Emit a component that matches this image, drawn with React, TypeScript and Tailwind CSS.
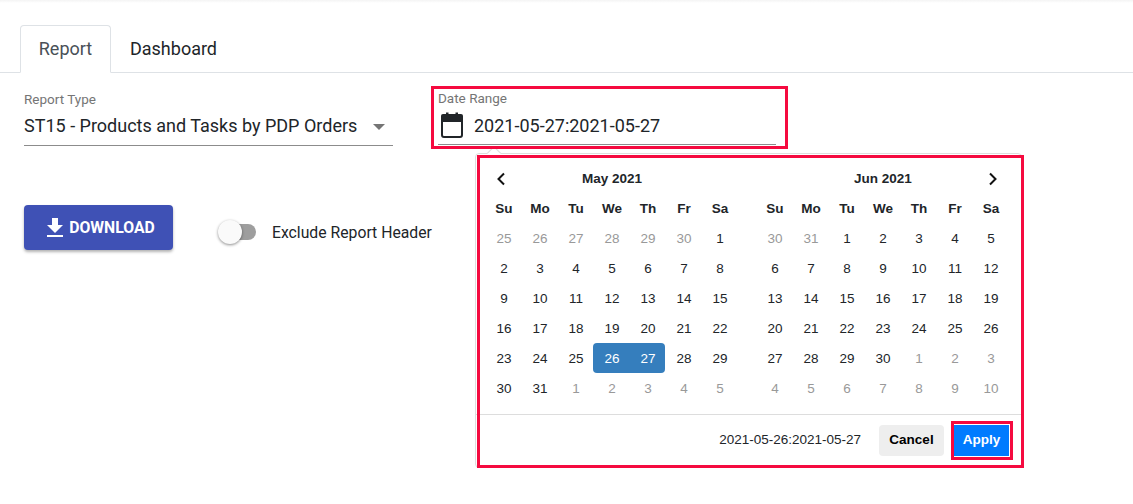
import React from "react";

const dow = ["Su", "Mo", "Tu", "We", "Th", "Fr", "Sa"];
type Cell = { d: number; off?: boolean; sel?: "l" | "r" };
const range = (a: number, b: number, off = false): Cell[] => {
  const r: Cell[] = [];
  for (let i = a; i <= b; i++) r.push({ d: i, off });
  return r;
};
const may: Cell[] = [
  ...range(25, 30, true),
  ...range(1, 25),
  { d: 26, sel: "l" },
  { d: 27, sel: "r" },
  ...range(28, 31),
  ...range(1, 5, true),
];
const jun: Cell[] = [...range(30, 31, true), ...range(1, 30), ...range(1, 10, true)];

function Month({ title, cells, left, right }: { title: string; cells: Cell[]; left?: boolean; right?: boolean }) {
  return (
    <div className="w-[252px]">
      <div className="h-[30px] flex items-center relative">
        <div className="w-9 flex justify-center pr-[6px]">
          {left && (
            <svg width="10" height="14" viewBox="0 0 10 14" fill="none" stroke="#111" strokeWidth="2">
              <path d="M8 1.5 L2.5 7 L8 12.5" />
            </svg>
          )}
        </div>
        <div className="flex-1 text-center font-bold text-[#212529]">{title}</div>
        <div className="w-9 flex justify-center pl-[4px]">
          {right && (
            <svg width="10" height="14" viewBox="0 0 10 14" fill="none" stroke="#111" strokeWidth="2">
              <path d="M2 1.5 L7.5 7 L2 12.5" />
            </svg>
          )}
        </div>
      </div>
      <div className="grid grid-cols-7">
        {dow.map((d) => (
          <div key={d} className="h-[30px] flex items-center justify-center font-bold text-[#212529]">
            {d}
          </div>
        ))}
        {cells.map((c, i) => (
          <div
            key={i}
            className={
              c.sel === "l"
                ? "h-[30px] -ml-[1px] mr-[1px] pl-[2px] -mt-[1px] mb-[1px] pt-[2px] flex items-center justify-center bg-[#357ebd] text-white rounded-l-[4px]"
                : c.sel === "r"
                ? "h-[30px] -ml-[1px] mr-[1px] pl-[2px] -mt-[1px] mb-[1px] pt-[2px] flex items-center justify-center bg-[#357ebd] text-white rounded-r-[4px]"
                : c.off
                ? "h-[30px] flex items-center justify-center text-[#999]"
                : "h-[30px] flex items-center justify-center text-[#212529]"
            }
          >
            {c.d}
          </div>
        ))}
      </div>
    </div>
  );
}

export default function App() {
  return (
    <div className="relative w-[1133px] h-[504px] bg-white overflow-hidden font-['Roboto',sans-serif] text-[#212529]">
      <div className="h-[3px] bg-gradient-to-b from-[#f4f4f4] to-white" />
      <div className="pt-[22px] px-5 h-[70px] border-b border-[#dee2e6] flex">
        <div className="w-[91px] h-12 pb-[1px] border border-[#dee2e6] border-b-white rounded-t-[4px] bg-white flex items-center justify-center text-[18px] text-[#495057]">
          Report
        </div>
        <div className="w-[124px] h-12 pb-[1px] pl-[1px] flex items-center justify-center text-[18px] text-[#212529]">Dashboard</div>
      </div>

      <div className="flex pl-6 pt-[19px]">
        <div className="w-[369px]">
          <div className="text-[13.5px] leading-[16px] text-[#757575] h-[16px] -mt-[1px]">Report Type</div>
          <div className="h-[37px] mt-[2px] border-b border-[#8c8c8c] flex items-center justify-between pb-[4px] pr-[8px] text-[18px]">
            <span>ST15 - Products and Tasks by PDP Orders</span>
            <span className="w-0 h-0 border-x-[6px] border-x-transparent border-t-[6px] border-t-[#757575] mt-[4px]" />
          </div>
        </div>
        <div className="ml-[45px] w-[338px]">
          <div className="text-[13.5px] leading-[16px] text-[#757575] h-[16px] -mt-[2px]">Date Range</div>
          <div className="h-[37px] mt-[2px] border-b border-[#8c8c8c] flex items-center pb-[2px] text-[18px]">
            <svg className="ml-[2px]" width="24" height="26" viewBox="0 0 24 26" fill="none">
              <rect x="2" y="4" width="20" height="21" rx="2" stroke="#212529" strokeWidth="2" />
              <path d="M1 4 a2 2 0 0 1 2-2 H21 a2 2 0 0 1 2 2 V10 H1 Z" fill="#212529" />
              <rect x="6" y="0.5" width="2.5" height="3" fill="#212529" />
              <rect x="15.5" y="0.5" width="2.5" height="3" fill="#212529" />
            </svg>
            <span className="ml-[10px]">2021-05-27:2021-05-27</span>
          </div>
        </div>
      </div>

      <div className="flex items-center pl-6 mt-[59px]">
        <div className="w-[149px] h-[45px] pl-[4px] rounded-[4px] bg-[#3f51b5] text-white flex items-center justify-center gap-[5px] font-bold text-[15.75px] shadow-[0_2px_3px_rgba(0,0,0,0.3)]">
          <svg width="18" height="20" viewBox="0 0 18 20" fill="white">
            <path d="M6 0 H12 V7 H17 L9 15 L1 7 H6 Z" />
            <rect x="1" y="17" width="16" height="2" />
          </svg>
          <span>DOWNLOAD</span>
        </div>
        <div className="relative ml-[49px] mt-[9px] w-[34px] h-4 rounded-full bg-[#9e9e9e]">
          <div className="absolute -left-[4px] -top-[4px] w-6 h-6 rounded-full bg-[#fafafa] shadow-[0_1px_3px_rgba(0,0,0,0.45)]" />
        </div>
        <div className="ml-4 mt-[11px] text-[15.75px]">Exclude Report Header</div>
      </div>

      {/* date range popup */}
      <div className="absolute left-[475px] top-[153px] w-[547px] h-[315px] bg-white border border-[#dddddd] rounded-[4px] font-['Liberation_Sans',sans-serif] text-[13.5px]">
        <div className="absolute left-[13px] -top-[6px] w-[10px] h-[10px] rotate-45 bg-white border-l border-t border-[#dddddd]" />
        <div className="flex pl-[10px] pt-[10px] gap-[19px] h-[260px]">
          <Month title="May 2021" cells={may} left />
          <Month title="Jun 2021" cells={jun} right />
        </div>
        <div className="border-t border-[#dddddd] h-[54px] flex items-center justify-end pr-[12px] pb-[2px]">
          <span className="mr-[18px] text-[#212529]">2021-05-26:2021-05-27</span>
          <div className="w-[65px] h-[31px] rounded-[4px] bg-[#eeeeee] font-bold text-black flex items-center justify-center">Cancel</div>
          <div className="ml-[10px] w-[55px] h-[31px] bg-[#007bff] font-bold text-white flex items-center justify-center">Apply</div>
        </div>
      </div>

      {/* annotation rectangles */}
      <div className="absolute left-[431px] top-[86px] w-[357px] h-[63px] border-[3px] border-[#f50a3f]" />
      <div className="absolute left-[477px] top-[155px] w-[547px] h-[313px] border-[3px] border-[#f50a3f]" />
      <div className="absolute left-[951px] top-[421px] w-[62px] h-[39px] border-[3px] border-[#f50a3f]" />
    </div>
  );
}
